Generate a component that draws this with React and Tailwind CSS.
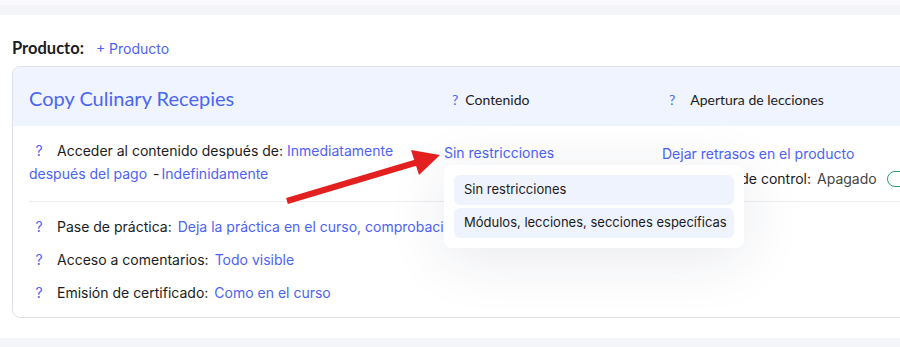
import React from "react";

const Q = ({ cls = "" }) => (
  <span className={"inline-block w-5 text-center text-[#4d63f6] " + cls}>?</span>
);

export default function App() {
  return (
    <div className="relative w-[900px] h-[347px] overflow-hidden bg-[#f4f5f8]" style={{ fontFamily: "Inter, 'Noto Sans', sans-serif" }}>
      <div className="h-[5px] bg-[#f9f9fb]" />
      <div className="h-[10px] bg-[#f4f5f8]" />
      <div className="bg-white h-[323px] pl-3 pt-[21px]">
        <div className="flex items-baseline h-[30px]">
          <span className="text-[16.5px] font-bold text-[#1c1c22]" style={{ fontFamily: "Lato, sans-serif" }}>Producto:</span>
          <span className="ml-[12px] text-[14px] text-[#4d63f6]">+ Producto</span>
        </div>
        <div className="w-[910px] rounded-lg border border-[#dfdfec] overflow-hidden">
          <div className="grid grid-cols-[432px_218px_1fr] h-[59px] bg-[#f0f4fe] items-center">
            <div className="pl-4 pt-[3px] text-[20px] text-[#4a66f2]" style={{ fontFamily: "Lato, sans-serif" }}>Copy Culinary Recepies</div>
            <div className="pl-[3px] pt-[5px] text-[14px] text-[#1c1c22]" style={{ fontFamily: "Lato, sans-serif" }}>
              <span className="text-[#4d63f6] mr-[7px] ml-[4px]">?</span>Contenido
            </div>
            <div className="pl-[3px] pt-[5px] text-[14px] text-[#1c1c22]" style={{ fontFamily: "Lato, sans-serif" }}>
              <span className="text-[#4d63f6] mr-[15px] ml-[3px]">?</span>Apertura de lecciones
            </div>
          </div>
          <div className="pl-4 text-[14px] text-[#1c1c22]">
            <div className="grid grid-cols-[415px_218px_1fr] pt-[13px] h-[76px] border-b border-[#ececf2]">
              <div className="leading-[23px] pr-[30px]">
                <Q cls="mr-2" />Acceder al contenido después de:{" "}
                <span className="text-[#4d63f6]">Inmediatamente después del pago</span>
                <span className="ml-[6px]">-</span>
                <span className="text-[#4d63f6] ml-[2px]">Indefinidamente</span>
              </div>
              <div className="text-[#4d63f6] pt-[2px] leading-[23px]">Sin restricciones</div>
              <div className="leading-[28px]">
                <div className="text-[#4d63f6] leading-[23px] mt-[3px]">Dejar retrasos en el producto</div>
                <div className="flex items-center whitespace-nowrap">
                  <Q cls="mr-[16px]" />Punto de control:
                  <span className="ml-[6px] text-[#444]">Apagado</span>
                  <span className="ml-[10px] inline-block w-[30px] h-[16px] rounded-full border-[1.5px] border-[#2a9d6f]" />
                </div>
              </div>
            </div>
            <div className="pt-[8px] pb-[8px] whitespace-nowrap">
              <div className="h-[33px] flex items-center">
                <Q cls="mr-2" />Pase de práctica:
                <span className="ml-[6px] text-[#4d63f6]">Deja la práctica en el curso, comprobación automática</span>
              </div>
              <div className="h-[33px] flex items-center">
                <Q cls="mr-2" />Acceso a comentarios:
                <span className="ml-[6px] text-[#4d63f6]">Todo visible</span>
              </div>
              <div className="h-[33px] flex items-center">
                <Q cls="mr-2" />Emisión de certificado:
                <span className="ml-[6px] text-[#4d63f6]">Como en el curso</span>
              </div>
            </div>
          </div>
        </div>
      </div>

      <div className="absolute left-[444px] top-[165px] w-[300px] bg-white rounded-lg p-[10px] flex flex-col gap-[3px] shadow-[0_10px_60px_rgba(30,40,80,0.10)] text-[13px] text-[#1c1c22] whitespace-nowrap">
        <div className="h-[30px] rounded-md bg-[#eff3fd] pl-[10px] flex items-center">Sin restricciones</div>
        <div className="h-[30px] rounded-md bg-[#eff3fd] pl-[10px] flex items-center">Módulos, lecciones, secciones específicas</div>
      </div>

      <svg className="absolute left-0 top-0 pointer-events-none" width="900" height="347">
        <line x1="287" y1="201" x2="418" y2="162" stroke="#e3201f" strokeWidth="6" />
        <polygon points="440,155 411,150 419,175" fill="#e3201f" />
      </svg>
    </div>
  );
}
